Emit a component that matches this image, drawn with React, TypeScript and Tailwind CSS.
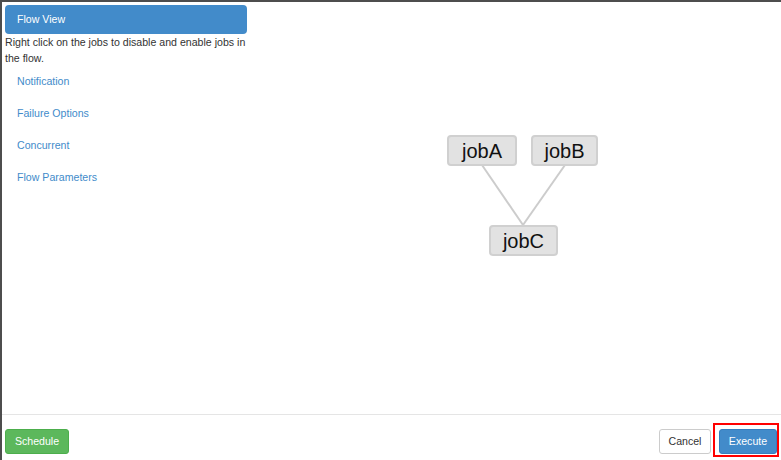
import React from 'react';

const navItems = ['Notification', 'Failure Options', 'Concurrent', 'Flow Parameters'];

interface JobNode {
  id: string;
  x: number;
  y: number;
  w: number;
  h: number;
}

// positions inside the graph canvas
const nodes: JobNode[] = [
  { id: 'jobA', x: 200, y: 130, w: 70, h: 31 },
  { id: 'jobB', x: 284, y: 130, w: 67, h: 31 },
  { id: 'jobC', x: 242, y: 220, w: 69, h: 31 },
];

const App: React.FC = () => {
  return (
    <div className="w-[781px] h-[460px] bg-white flex flex-col border-t-2 border-l-2 border-[#4d4d4d] font-['Liberation_Sans',Arial,sans-serif] text-[10.6px] text-[#333] overflow-hidden">
      <div className="flex-1 flex pt-[3px] pl-[3px]">
        {/* left nav */}
        <div className="w-[242px] flex flex-col">
          <div className="h-[29px] flex items-center px-3 rounded-[4px] bg-[#428bca] text-white">Flow View</div>
          <p className="leading-[16px]">Right click on the jobs to disable and enable jobs in the flow.</p>
          <ul className="flex flex-col">
            {navItems.map((item) => (
              <li key={item} className="h-[32px] flex items-center px-3 text-[#428bca]">
                {item}
              </li>
            ))}
          </ul>
        </div>

        {/* graph canvas */}
        <div className="flex-1 relative">
          <svg className="absolute inset-0 w-full h-full">
            <line x1={235} y1={160} x2={276} y2={220} stroke="#cccccc" strokeWidth={2} />
            <line x1={318} y1={160} x2={276} y2={220} stroke="#cccccc" strokeWidth={2} />
          </svg>
          {nodes.map((n) => (
            <div
              key={n.id}
              className="absolute flex items-center justify-center rounded-[4px] border-2 border-[#d0d0d0] bg-[#e2e2e2] text-[20px] text-[#111]"
              style={{ left: n.x, top: n.y, width: n.w, height: n.h }}
            >
              {n.id}
            </div>
          ))}
        </div>
      </div>

      {/* footer */}
      <div className="h-[46px] border-t border-[#e5e5e5] flex items-start justify-between pt-[14px] pl-[3px] pr-[4px]">
        <button className="h-[25px] w-[64px] rounded-[3px] border border-[#4cae4c] bg-[#5cb85c] text-white">Schedule</button>
        <div className="flex gap-2 relative">
          <button className="h-[25px] w-[52px] rounded-[3px] border border-[#ccc] bg-white text-[#333]">Cancel</button>
          <button className="h-[25px] w-[58px] rounded-[3px] border border-[#357ebd] bg-[#428bca] text-white">Execute</button>
          {/* red highlight annotation */}
          <div className="absolute right-[-2px] top-[-6px] w-[66px] h-[34px] border-2 border-[#ff0000] pointer-events-none" />
        </div>
      </div>
    </div>
  );
};

export default App;
